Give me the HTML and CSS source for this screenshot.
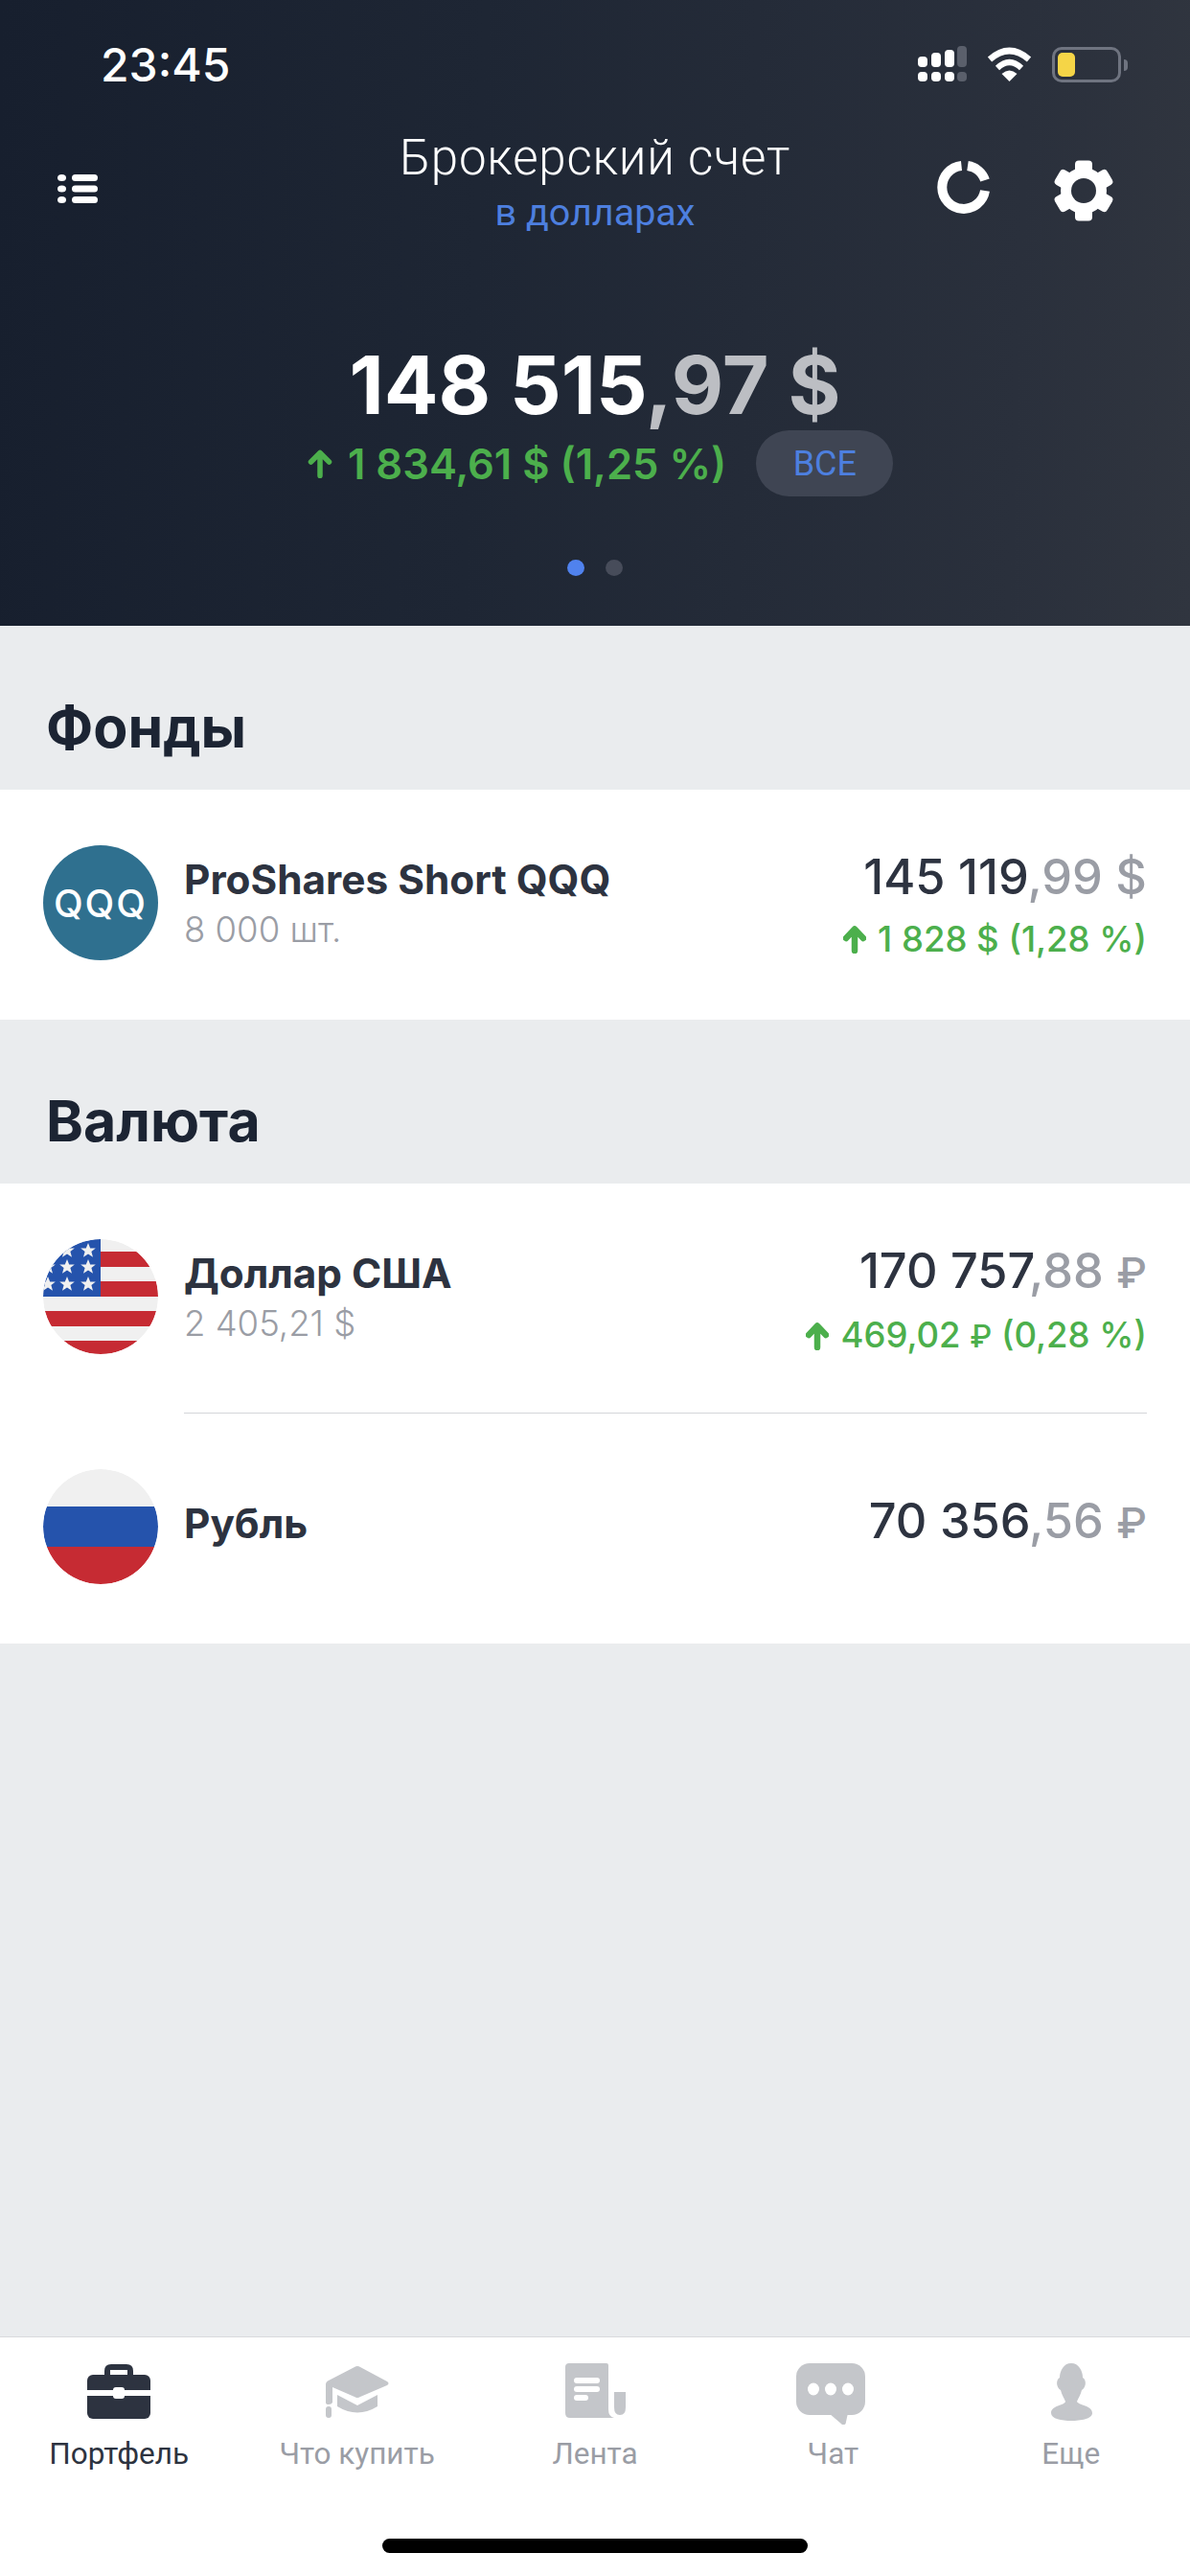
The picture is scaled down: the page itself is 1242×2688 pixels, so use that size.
FILE: index.html
```html
<!DOCTYPE html>
<html lang="ru">
<head>
<meta charset="utf-8">
<title>Брокерский счет</title>
<link rel="stylesheet" href="styles.css">
</head>
<body>
<div class="screen">
  <header class="hero">
    <div class="status">
      <span class="time">23:45</span>
      <div class="status-icons">
        <svg class="signal" width="51" height="37" viewBox="0 0 51 37">
          <g fill="#fff">
            <rect x="0" y="11" width="10" height="11" rx="4"/><rect x="0" y="27" width="10" height="10" rx="4"/>
            <rect x="14" y="7" width="10" height="15" rx="4"/><rect x="14" y="27" width="10" height="10" rx="4"/>
            <rect x="28" y="4" width="10" height="18" rx="4"/><rect x="28" y="27" width="10" height="10" rx="4"/>
          </g>
          <g fill="#5a5f6b">
            <rect x="41" y="0" width="10" height="22" rx="4"/><rect x="41" y="27" width="10" height="10" rx="4"/>
          </g>
        </svg>
        <svg class="wifi" width="47" height="36" viewBox="0 0 47 36">
          <g fill="none" stroke="#fff">
            <path d="M3 13 Q23.500 -5 44 13" stroke-width="6.500"/>
            <path d="M11 22 Q23.500 10 36 22" stroke-width="6"/>
          </g>
          <path d="M23.500 36 L15.500 28 Q23.500 21 31.500 28 Z" fill="#fff"/>
        </svg>
        <div class="battery"><div class="battery-body"><div class="battery-fill"></div></div><div class="battery-nub"></div></div>
      </div>
    </div>
    <div class="nav">
      <svg class="menu-icon" width="42" height="30" viewBox="0 0 42 30">
        <g fill="#fff">
          <ellipse cx="4.500" cy="3.500" rx="4.500" ry="3.500"/><ellipse cx="4.500" cy="15" rx="4.500" ry="3.500"/><ellipse cx="4.500" cy="26.500" rx="4.500" ry="3.500"/>
          <rect x="15" y="0" width="27" height="7" rx="3.500"/><rect x="15" y="11.500" width="27" height="7" rx="3.500"/><rect x="15" y="23" width="27" height="7" rx="3.500"/>
        </g>
      </svg>
      <div class="nav-title">
        <div class="title">Брокерский счет</div>
        <div class="subtitle">в долларах</div>
      </div>
      <div class="nav-actions">
        <svg width="56" height="56" viewBox="0 0 56 56">
          <g fill="none" stroke="#fff" stroke-width="10">
            <path d="M25.500 6 A22.500 22.500 0 1 0 50 32"/>
            <path d="M32 6 A22.500 22.500 0 0 1 50 21"/>
          </g>
        </svg>
        <svg width="64" height="64" viewBox="0 0 64 64">
          <mask id="gear-mask">
            <g fill="#fff">
              <circle cx="32" cy="32" r="24"/>
              <rect x="23" y="0.500" width="18" height="63" rx="4"/>
              <rect x="23" y="0.500" width="18" height="63" rx="4" transform="rotate(60 32 32)"/>
              <rect x="23" y="0.500" width="18" height="63" rx="4" transform="rotate(120 32 32)"/>
            </g>
            <circle cx="32" cy="32" r="13" fill="#000"/>
          </mask>
          <rect width="64" height="64" fill="#fff" mask="url(#gear-mask)"/>
        </svg>
      </div>
    </div>
    <div class="balance"><span>148 515</span><span class="balance-dec">,97 $</span></div>
    <div class="change-row">
      <svg class="hero-arrow" width="26" height="30" viewBox="0 0 26 30">
        <path d="M13 27.500 V4 M3.500 13 L13 3.500 L22.500 13" fill="none" stroke="#4caf4c" stroke-width="5.500" stroke-linecap="round" stroke-linejoin="round"/>
      </svg>
      <span class="hero-change">1 834,61 $ (1,25 %)</span>
      <span class="pill">ВСЕ</span>
    </div>
    <div class="dots"><span class="dot dot-active"></span><span class="dot"></span></div>
  </header>

  <main class="content">
    <h2 class="section-title">Фонды</h2>
    <section class="card">
      <div class="row">
        <div class="logo logo-qqq"><span>QQQ</span></div>
        <div class="row-body">
          <div class="info">
            <div class="name">ProShares Short QQQ</div>
            <div class="sub">8 000 шт.</div>
          </div>
          <div class="amounts">
            <div class="value">145 119<span class="dec">,99 $</span></div>
            <div class="delta">
              <svg class="row-arrow" width="24" height="29" viewBox="0 0 24 29">
                <path d="M12 26 V5 M3 13 L12 3.500 L21 13" fill="none" stroke="#4caf4c" stroke-width="6.500" stroke-linecap="round" stroke-linejoin="round"/>
              </svg>
              <span>1 828 $ (1,28 %)</span>
            </div>
          </div>
        </div>
      </div>
    </section>

    <h2 class="section-title">Валюта</h2>
    <section class="card">
      <div class="row">
        <svg class="logo" width="120" height="120" viewBox="0 0 120 120">
          <defs>
            <clipPath id="circle-clip"><circle cx="60" cy="60" r="60"/></clipPath>
            <polygon id="star" points="0,-8 2.200,-2.600 7.800,-2.500 3.400,1.100 5,6.700 0,3.500 -5,6.700 -3.400,1.100 -7.800,-2.500 -2.200,-2.600"/>
          </defs>
          <g clip-path="url(#circle-clip)">
            <rect width="120" height="120" fill="#f0f0f0"/>
            <g fill="#c62b33">
              <rect x="60" y="13" width="60" height="16"/>
              <rect x="60" y="44" width="60" height="16"/>
              <rect x="0" y="75" width="120" height="16"/>
              <rect x="0" y="106" width="120" height="16"/>
            </g>
            <rect width="60" height="60" fill="#2553ac"/>
            <g fill="#f0f0f0">
              <use href="#star" x="47" y="12"/><use href="#star" x="25" y="12"/>
              <use href="#star" x="47" y="29"/><use href="#star" x="25" y="29"/><use href="#star" x="5" y="29"/>
              <use href="#star" x="47" y="47"/><use href="#star" x="25" y="47"/><use href="#star" x="5" y="47"/>
            </g>
          </g>
        </svg>
        <div class="row-body row-body-line">
          <div class="info">
            <div class="name">Доллар США</div>
            <div class="sub">2 405,21 $</div>
          </div>
          <div class="amounts">
            <div class="value">170 757<span class="dec">,88 <span class="rub">₽</span></span></div>
            <div class="delta">
              <svg class="row-arrow" width="24" height="29" viewBox="0 0 24 29">
                <path d="M12 26 V5 M3 13 L12 3.500 L21 13" fill="none" stroke="#4caf4c" stroke-width="6.500" stroke-linecap="round" stroke-linejoin="round"/>
              </svg>
              <span>469,02 <span class="rub">₽</span> (0,28 %)</span>
            </div>
          </div>
        </div>
      </div>
      <div class="row">
        <svg class="logo" width="120" height="120" viewBox="0 0 120 120">
          <g clip-path="url(#circle-clip)">
            <rect width="120" height="39" fill="#f0f0f0"/>
            <rect y="39" width="120" height="42" fill="#2553ac"/>
            <rect y="81" width="120" height="39" fill="#c62b33"/>
          </g>
        </svg>
        <div class="row-body row-body-single">
          <div class="info">
            <div class="name">Рубль</div>
          </div>
          <div class="amounts">
            <div class="value">70 356<span class="dec">,56 <span class="rub">₽</span></span></div>
          </div>
        </div>
      </div>
    </section>
  </main>

  <footer class="tabbar">
    <nav class="tabs">
      <div class="tab tab-active">
        <svg width="80" height="64" viewBox="0 0 80 64">
          <path fill-rule="evenodd" fill="#2d3340" d="M25 13 V8 Q25 1 32 1 H48 Q55 1 55 8 V13 H49 V7 H31 V13 Z"/>
          <rect x="7" y="12" width="66" height="46" rx="6" fill="#2d3340"/>
          <rect x="7" y="28" width="66" height="6" fill="#fff"/>
          <rect x="34" y="25" width="12" height="12" rx="3" fill="#fff"/>
        </svg>
        <span class="tab-label">Портфель</span>
      </div>
      <div class="tab">
        <svg width="80" height="64" viewBox="0 0 80 64">
          <g fill="#c4c6ca">
            <path d="M37 4 Q40 2 43 4 L71 19 Q74 21 71 23 L43 35 Q40 37 37 35 L14 25 V41 Q13 43 10 43 Q7 43 7 41 V22 Q7 19.500 9 18.500 Z"/>
            <path d="M19 33 L40 44 L61 33 V45 Q40 58 19 45 Z"/>
            <rect x="7" y="45" width="6" height="12" rx="3"/>
          </g>
        </svg>
        <span class="tab-label">Что купить</span>
      </div>
      <div class="tab">
        <svg width="80" height="64" viewBox="0 0 80 64">
          <path fill="#c4c6ca" d="M13 0 H52 Q54 0 54 2 V48 Q54 56 60 57 H14 Q9 57 9 52 V4 Q9 0 13 0 Z"/>
          <path fill="#c4c6ca" d="M60 30 H72 V46 Q72 54 66 54 Q60 54 60 46 Z"/>
          <g fill="#fff">
            <rect x="18" y="15" width="27" height="6" rx="3"/>
            <rect x="18" y="24" width="27" height="6" rx="3"/>
            <rect x="18" y="33" width="15" height="6" rx="3"/>
          </g>
        </svg>
        <span class="tab-label">Лента</span>
      </div>
      <div class="tab">
        <svg width="80" height="64" viewBox="0 0 80 64">
          <rect x="2" y="0" width="72" height="54" rx="14" fill="#c4c6ca"/>
          <path d="M36 52 L50 64 Q54 65 54 61 L56 52 Z" fill="#c4c6ca"/>
          <g fill="#fff">
            <ellipse cx="20" cy="27" rx="6" ry="6.500"/><ellipse cx="38" cy="27" rx="6" ry="6.500"/><ellipse cx="56" cy="27" rx="6" ry="6.500"/>
          </g>
        </svg>
        <span class="tab-label">Чат</span>
      </div>
      <div class="tab">
        <svg width="80" height="64" viewBox="0 0 80 64">
          <g fill="#c4c6ca">
            <path d="M40 0 C48 0 52 8 52 15 C56 17 56 25 51 28 C50 33 47 37 46 40 C48 44 62 44 62 52 C62 58 50 60 40 60 C30 60 19 58 19 52 C19 44 33 44 34 40 C33 37 30 33 29 28 C24 25 24 17 28 15 C28 8 32 0 40 0 Z"/>
          </g>
        </svg>
        <span class="tab-label">Еще</span>
      </div>
    </nav>
    <div class="home-bar"></div>
  </footer>
</div>
</body>
</html>
```
FILE: styles.css
```css
* { box-sizing: border-box; }
html, body { margin: 0; padding: 0; }
body { width: 1242px; height: 2688px; overflow: hidden; background: #eaecee; font-family: Inter, "Liberation Sans", sans-serif; }
.screen { display: flex; flex-direction: column; height: 2688px; }

.hero { height: 653px; flex: none; background: linear-gradient(92deg, #171f2e 0%, #1e2634 40%, #2a303c 85%, #30353f 100%); color: #fff; font-family: Roboto, sans-serif; }

.status { height: 96px; padding: 40px 65px 0 105px; display: flex; justify-content: space-between; align-items: flex-start; }
.time { font-family: Inter, sans-serif; font-weight: 500; font-size: 48px; line-height: 56px; }
.status-icons { display: flex; align-items: flex-start; margin-top: 8px; }
.wifi { margin-left: 21px; margin-top: 1px; }
.battery { display: flex; align-items: center; margin-left: 21px; margin-top: 1px; }
.battery-body { width: 72px; height: 37px; border: 3px solid #6f7480; border-radius: 10px; padding: 3px; }
.battery-fill { width: 18px; height: 100%; background: #f5d547; border-radius: 5px; }
.battery-nub { width: 4px; height: 12px; margin-left: 3px; background: #6f7480; border-radius: 0 4px 4px 0; }

.nav { margin-top: 41px; height: 107px; padding: 0 60px; display: grid; grid-template-columns: 1fr auto 1fr; align-items: start; }
.menu-icon { margin-top: 45px; }
.nav-title { text-align: center; }
.title { font-size: 51px; line-height: 56px; font-weight: 300; letter-spacing: 0.8px; }
.subtitle { margin-top: 7px; font-size: 39.500px; line-height: 44px; color: #4d7fdf; }
.nav-actions { justify-self: end; display: flex; align-items: flex-start; gap: 65px; margin: 30px 19px 0 0; }

.balance { margin-top: 111px; text-align: center; font-family: Inter, sans-serif; font-size: 84px; line-height: 94px; font-weight: 700; }
.balance-dec { color: #bcbec3; }

.change-row { height: 69px; display: flex; align-items: center; padding-left: 321px; }
.hero-change { margin-left: 16px; font-family: Inter, sans-serif; font-size: 43.500px; font-weight: 600; color: #4caf4c; white-space: nowrap; }
.pill { margin-left: 31px; width: 143px; height: 69px; border-radius: 35px; background: #3f4553; color: #4d7fdf; font-size: 36px; display: flex; align-items: center; justify-content: center; }

.dots { margin-top: 66px; display: flex; justify-content: center; gap: 22px; }
.dot { width: 18px; height: 17px; border-radius: 50%; background: #474c5a; }
.dot-active { background: #5082ee; }

.content { flex: 1; }
.section-title { margin: 0; height: 171px; padding: 76px 0 0 48px; font-size: 59px; line-height: 60px; font-weight: 700; color: #1c2433; }
.card { background: #fff; }
.row { display: flex; height: 240px; padding-right: 45px; }
.logo { flex: none; width: 120px; height: 120px; margin: 58px 27px 0 45px; border-radius: 50%; display: block; }
.logo-qqq { background: #2f708f; display: flex; align-items: center; justify-content: center; color: #fff; font-size: 40px; font-weight: 500; letter-spacing: 2px; }
.row-body { flex: 1; display: flex; justify-content: space-between; }
.row-body-line { border-bottom: 1px solid #d4d6d9; }
.info { padding-top: 70px; }
.name { font-size: 42.300px; line-height: 48px; font-weight: 700; color: #2d3340; }
.sub { margin-top: 6px; font-size: 36.500px; line-height: 44px; font-weight: 300; color: #9a9da5; }
.amounts { padding-top: 65px; text-align: right; }
.value { font-size: 50.500px; line-height: 52px; font-weight: 500; color: #2d3340; }
.dec { color: #9a9da5; }
.rub { font-size: 0.88em; }
.delta { margin-top: 17px; display: flex; justify-content: flex-end; align-items: center; gap: 12px; font-size: 36.500px; line-height: 44px; font-weight: 500; color: #4caf4c; }
.row-body-single .info { padding-top: 91px; }
.row-body-single .amounts { padding-top: 86px; }

.tabbar { flex: none; height: 250px; background: #fff; border-top: 1px solid #d8dadd; padding-top: 27px; font-family: Roboto, sans-serif; }
.tabs { display: grid; grid-template-columns: repeat(5, 1fr); }
.tab { display: flex; flex-direction: column; align-items: center; }
.tab-label { margin-top: 11px; font-size: 31.500px; line-height: 40px; color: #9a9da5; }
.tab-active .tab-label { color: #2d3340; }
.home-bar { margin: 68px auto 0; width: 444px; height: 15px; border-radius: 8px; background: #000; }
```
